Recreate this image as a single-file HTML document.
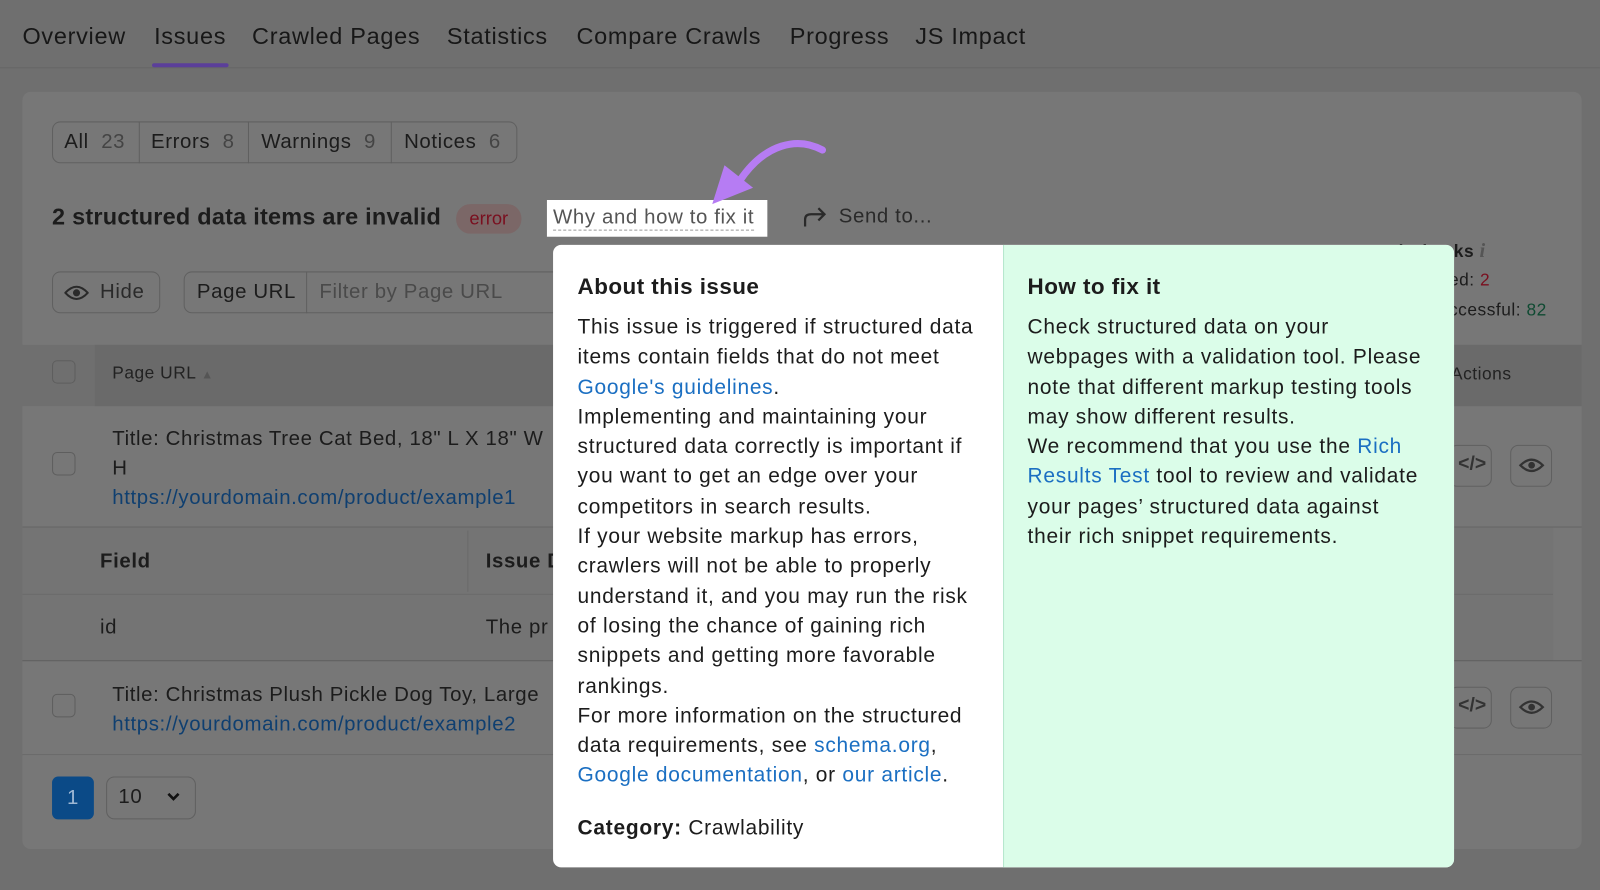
<!DOCTYPE html>
<html><head><meta charset="utf-8"><style>
*{box-sizing:border-box;margin:0;padding:0}
html,body{width:1600px;height:890px;overflow:hidden;background:#6f6f6f;font-family:"Liberation Sans",sans-serif;color:#1c1c1c}
#w{position:absolute;left:0;top:0;width:1568px;height:872px;transform:scale(1.0204);transform-origin:0 0}
.a{position:absolute;white-space:nowrap;letter-spacing:0.03em}
.tab{font-size:23px;top:22px;color:#171717}
.card{position:absolute;left:22px;top:90px;width:1528px;height:742px;background:#777;border-radius:8px}
.link{color:#0f3f70}
.pl{color:#1b6fc2}
.btn{position:absolute;border:1px solid #606060;border-radius:8px}
.pop p{font-size:20.5px;line-height:29.3px;white-space:nowrap;letter-spacing:0.035em}
</style></head><body><div id="w">
<div class="a tab" style="left:22px">Overview</div>
<div class="a tab" style="left:151px">Issues</div>
<div class="a" style="left:149px;top:62px;width:75px;height:4px;background:#5b3f9a;border-radius:2px"></div>
<div class="a tab" style="left:247px">Crawled Pages</div>
<div class="a tab" style="left:438px">Statistics</div>
<div class="a tab" style="left:565px">Compare Crawls</div>
<div class="a tab" style="left:774px">Progress</div>
<div class="a tab" style="left:897px">JS Impact</div>
<div class="a" style="left:0;top:66px;width:1568px;height:1px;background:#666"></div>
<div class="card"></div>
<div class="btn" style="left:51px;top:119px;width:456px;height:41px"></div>
<div class="a" style="left:136px;top:119px;width:1px;height:41px;background:#606060"></div>
<div class="a" style="left:243px;top:119px;width:1px;height:41px;background:#606060"></div>
<div class="a" style="left:383px;top:119px;width:1px;height:41px;background:#606060"></div>
<div class="a" style="left:63px;top:128px;font-size:20px">All <span style="color:#444;margin-left:6px">23</span></div>
<div class="a" style="left:148px;top:128px;font-size:20px">Errors <span style="color:#444;margin-left:6px">8</span></div>
<div class="a" style="left:256px;top:128px;font-size:20px">Warnings <span style="color:#444;margin-left:6px">9</span></div>
<div class="a" style="left:396px;top:128px;font-size:20px">Notices <span style="color:#444;margin-left:6px">6</span></div>
<div class="a" style="left:51px;top:199px;font-size:23px;font-weight:bold;letter-spacing:0.01em">2 structured data items are invalid</div>
<div class="a" style="left:447px;top:200px;width:64px;height:29px;border-radius:14px;background:#7b6767;color:#7a0f1f;font-size:18px;text-align:center;line-height:28px;letter-spacing:0">error</div>
<div class="a" style="left:536px;top:196px;width:216px;height:36px;background:#fff"></div>
<div class="a" style="left:542px;top:201px;font-size:20px;color:#555;border-bottom:1px dashed #999;line-height:24px">Why and how to fix it</div>
<svg class="a" style="left:690px;top:132px" width="125" height="75" viewBox="0 0 125 75"><path d="M116 15 C92 2 60 8 35 45" stroke="#b67cf3" stroke-width="7" fill="none" stroke-linecap="round"/><path d="M8 68 L20 30 L48 52 Z" fill="#b67cf3"/></svg>
<svg class="a" style="left:787px;top:202px" width="24" height="22" viewBox="0 0 24 22"><path d="M2 20 V13 Q2 8 8 8 H21 M15 2 L21 8 L15 14" stroke="#2a2a2a" stroke-width="2.2" fill="none"/></svg>
<div class="a" style="left:822px;top:201px;font-size:20px;color:#2a2a2a">Send to...</div>
<div class="btn" style="left:51px;top:266px;width:106px;height:41px"></div>
<svg class="a" style="left:63px;top:277px" width="24" height="20" viewBox="0 0 24 20"><path d="M1 10 Q12 -2 23 10 Q12 22 1 10Z" fill="none" stroke="#2a2a2a" stroke-width="2"/><circle cx="12" cy="10" r="3.5" fill="#2a2a2a"/></svg>
<div class="a" style="left:98px;top:275px;font-size:20px;color:#2a2a2a">Hide</div>
<div class="btn" style="left:180px;top:266px;width:400px;height:41px"></div>
<div class="a" style="left:300px;top:266px;width:1px;height:41px;background:#606060"></div>
<div class="a" style="left:193px;top:275px;font-size:20px">Page URL</div>
<div class="a" style="left:313px;top:275px;font-size:20px;color:#4a4a4a">Filter by Page URL</div>
<div class="a" style="left:1334px;top:235px;font-size:17px;font-weight:bold">Total Checks <span style="color:#555;font-style:italic;font-family:'Liberation Serif';font-size:20px">i</span></div>
<div class="a" style="left:1420px;top:265px;font-size:17px">ed: <span style="color:#7a0f1f">2</span></div>
<div class="a" style="left:1420px;top:294px;font-size:17px">ccessful: <span style="color:#0f4a32">82</span></div>
<div class="a" style="left:22px;top:338px;width:1528px;height:60px;background:#6f6f6f"></div>
<div class="a" style="left:93px;top:338px;width:1457px;height:60px;background:#6a6a6a"></div>
<div class="a" style="left:51px;top:353px;width:23px;height:23px;border:1px solid #5e5e5e;border-radius:5px"></div>
<div class="a" style="left:110px;top:356px;font-size:17px;color:#222">Page URL <span style="color:#555;font-size:12px">▲</span></div>
<div class="a" style="left:1422px;top:357px;font-size:17px;color:#222">Actions</div>
<div class="a" style="left:51px;top:443px;width:23px;height:23px;border:1px solid #5e5e5e;border-radius:5px"></div>
<div class="a" style="left:110px;top:416px;font-size:20px;line-height:29px">Title: Christmas Tree Cat Bed, 18" L X 18" W<br>H<br><span class="link">https://yourdomain.com/product/example1</span></div>
<div class="btn" style="left:1420px;top:436px;width:42px;height:41px"></div>
<div class="btn" style="left:1480px;top:436px;width:41px;height:41px"></div>
<div class="a" style="left:1429px;top:444px;font-size:19px;font-weight:bold;color:#333;letter-spacing:0">&lt;/&gt;</div>
<svg class="a" style="left:1488px;top:446px" width="26" height="20" viewBox="0 0 26 20"><path d="M2 10 Q13 -1 24 10 Q13 21 2 10Z" fill="none" stroke="#333" stroke-width="2.2"/><circle cx="13" cy="10" r="3.3" fill="#333"/></svg>
<div class="a" style="left:22px;top:516px;width:1528px;height:1px;background:#666"></div>
<div class="a" style="left:22px;top:517px;width:1500px;height:130px;background:#747474"></div>
<div class="a" style="left:458px;top:520px;width:1px;height:60px;background:#6a6a6a"></div>
<div class="a" style="left:22px;top:582px;width:1500px;height:1px;background:#6c6c6c"></div>
<div class="a" style="left:98px;top:539px;font-size:20px;font-weight:bold">Field</div>
<div class="a" style="left:476px;top:539px;font-size:20px;font-weight:bold">Issue D</div>
<div class="a" style="left:98px;top:604px;font-size:20px">id</div>
<div class="a" style="left:476px;top:604px;font-size:20px">The pr</div>
<div class="a" style="left:22px;top:647px;width:1528px;height:1px;background:#5f5f5f"></div>
<div class="a" style="left:51px;top:680px;width:23px;height:23px;border:1px solid #5e5e5e;border-radius:5px"></div>
<div class="a" style="left:110px;top:667px;font-size:20px;line-height:29px">Title: Christmas Plush Pickle Dog Toy, Large<br><span class="link">https://yourdomain.com/product/example2</span></div>
<div class="btn" style="left:1420px;top:673px;width:42px;height:41px"></div>
<div class="btn" style="left:1480px;top:673px;width:41px;height:41px"></div>
<div class="a" style="left:1429px;top:681px;font-size:19px;font-weight:bold;color:#333;letter-spacing:0">&lt;/&gt;</div>
<svg class="a" style="left:1488px;top:683px" width="26" height="20" viewBox="0 0 26 20"><path d="M2 10 Q13 -1 24 10 Q13 21 2 10Z" fill="none" stroke="#333" stroke-width="2.2"/><circle cx="13" cy="10" r="3.3" fill="#333"/></svg>
<div class="a" style="left:22px;top:739px;width:1528px;height:1px;background:#6a6a6a"></div>
<div class="a" style="left:51px;top:761px;width:41px;height:42px;background:#0b4a87;border-radius:6px;color:#9fb8d4;font-size:20px;text-align:center;line-height:42px">1</div>
<div class="btn" style="left:104px;top:761px;width:88px;height:42px"></div>
<div class="a" style="left:116px;top:770px;font-size:20px">10</div>
<svg class="a" style="left:162px;top:775px" width="16" height="12" viewBox="0 0 16 12"><path d="M3 3 L8 8 L13 3" stroke="#111" stroke-width="2.6" fill="none"/></svg>

<div class="a pop" style="left:542px;top:240px;width:883px;height:610px;border-radius:8px;overflow:hidden;background:#fff;white-space:normal;letter-spacing:0">
<div style="position:absolute;left:441px;top:0;width:442px;height:610px;background:#dbfde9;border-left:1px solid #b5e6cc"></div>
<div style="position:absolute;left:24px;top:28px;width:410px">
<div style="font-size:22px;font-weight:bold;margin-bottom:12px;letter-spacing:0.02em">About this issue</div>
<p>This issue is triggered if structured data<br>items contain fields that do not meet<br><span class="pl">Google's guidelines</span>.<br>Implementing and maintaining your<br>structured data correctly is important if<br>you want to get an edge over your<br>competitors in search results.<br>If your website markup has errors,<br>crawlers will not be able to properly<br>understand it, and you may run the risk<br>of losing the chance of gaining rich<br>snippets and getting more favorable<br>rankings.<br>For more information on the structured<br>data requirements, see <span class="pl">schema.org</span>,<br><span class="pl">Google documentation</span>, or <span class="pl">our article</span>.</p>
<p style="margin-top:22px"><b>Category:</b> Crawlability</p>
</div>
<div style="position:absolute;left:465px;top:28px;width:410px">
<div style="font-size:22px;font-weight:bold;margin-bottom:12px;letter-spacing:0.02em">How to fix it</div>
<p>Check structured data on your<br>webpages with a validation tool. Please<br>note that different markup testing tools<br>may show different results.<br>We recommend that you use the <span class="pl">Rich</span><br><span class="pl">Results Test</span> tool to review and validate<br>your pages’ structured data against<br>their rich snippet requirements.</p>
</div>
</div>
</div></body></html>
